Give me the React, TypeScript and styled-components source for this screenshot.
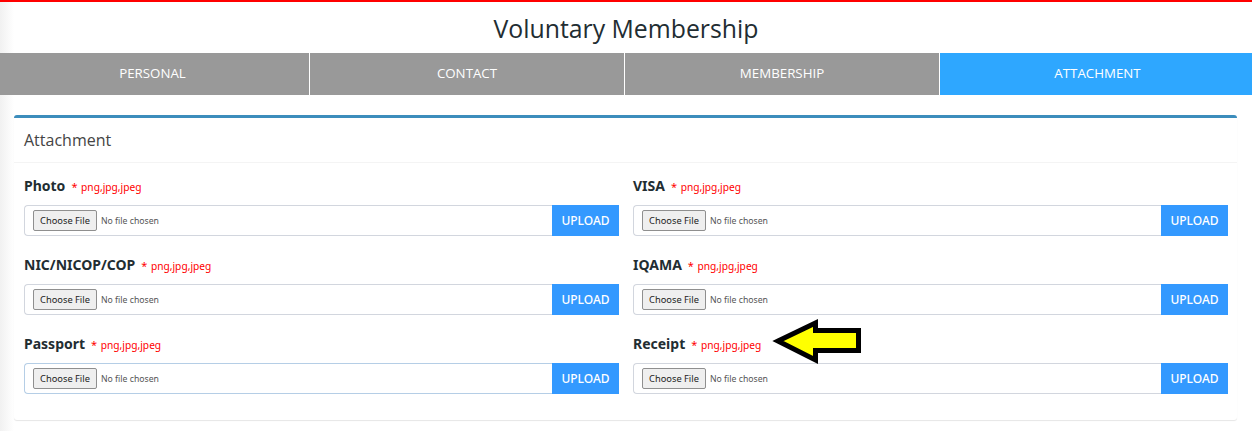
import React from "react";
import styled, { createGlobalStyle } from "styled-components";

const GlobalStyle = createGlobalStyle`
  html, body {
    margin: 0;
    padding: 0;
    background: #fff;
  }
  * {
    box-sizing: border-box;
  }
`;

const tabs = ["PERSONAL", "CONTACT", "MEMBERSHIP", "ATTACHMENT"];

const rows = [
  [{ label: "Photo" }, { label: "VISA" }],
  [{ label: "NIC/NICOP/COP" }, { label: "IQAMA" }],
  [{ label: "Passport", focused: true }, { label: "Receipt", arrow: true }],
];

type UploadProps = {
  label: string;
  focused?: boolean;
  arrow?: boolean;
};

function UploadField({ label, focused, arrow }: UploadProps) {
  return (
    <Field>
      <LabelRow>
        <Label>{label}</Label>
        <Hint>
          <Star>*</Star> png,jpg,jpeg
        </Hint>
        {arrow && <Arrow />}
      </LabelRow>
      <InputGroup>
        <FileBox $focused={focused}>
          <ChooseButton>Choose File</ChooseButton>
          <NoFile>No file chosen</NoFile>
        </FileBox>
        <UploadButton>UPLOAD</UploadButton>
      </InputGroup>
    </Field>
  );
}

function Arrow() {
  return (
    <ArrowSvg width="92" height="50" viewBox="0 0 92 50">
      <path
        d="M8 25 L45.5 7 L45.5 14.5 L88.5 14.5 L88.5 34.5 L45.5 34.5 L45.5 44 Z"
        fill="#ffff00"
        stroke="#000"
        strokeWidth="5"
        strokeLinejoin="miter"
      />
    </ArrowSvg>
  );
}

export default function App() {
  return (
    <Page>
      <GlobalStyle />
      <Title>Voluntary Membership</Title>
      <Tabs>
        {tabs.map((tab, i) => (
          <Tab key={tab} $active={i === 3} $first={i === 0}>
            {tab}
          </Tab>
        ))}
      </Tabs>
      <Content>
        <Panel>
          <PanelHeader>Attachment</PanelHeader>
          <PanelBody>
            {rows.flat().map(field => (
              <UploadField key={field.label} {...field} />
            ))}
          </PanelBody>
        </Panel>
      </Content>
    </Page>
  );
}

const Page = styled.div`
  width: 1252px;
  height: 431px;
  overflow: hidden;
  border-top: 2px solid #f00;
  background: linear-gradient(to right, #f1f1f1, #fff 14px);
  font-family: "Noto Sans", "Open Sans", sans-serif;
`;
const Title = styled.h1`
  margin: 0;
  height: 51px;
  padding-top: 8px;
  text-align: center;
  font-family: "Open Sans", "Noto Sans", sans-serif;
  font-size: 24.8px;
  line-height: 36px;
  font-weight: 400;
  color: #222d32;
`;
const Tabs = styled.div`
  display: grid;
  grid-template-columns: 309px 314px 314px 312px;
  column-gap: 1px;
  background: #fff;
`;
const Tab = styled.div<{ $active?: boolean; $first?: boolean }>`
  height: 42px;
  line-height: 41px;
  text-align: center;
  font-family: "Open Sans", "Noto Sans", sans-serif;
  font-size: 13.3px;
  color: #fff;
  background: ${props => (props.$active ? "#2ea7ff" : "#999999")};
  padding-right: ${props => (props.$first ? "4px" : "0")};
  padding-left: ${props => (props.$active ? "3px" : "0")};
`;
const Content = styled.div`
  padding: 20px 15px 0 14px;
`;
const Panel = styled.section`
  height: 305px;
  background: #fff;
  border-top: 3px solid #3c8dbc;
  border-radius: 3px;
  box-shadow: 0 1px 1px rgba(0, 0, 0, 0.1);
`;
const PanelHeader = styled.div`
  height: 45px;
  padding: 10px 10px 0;
  font-family: "Open Sans", "Noto Sans", sans-serif;
  font-size: 16px;
  line-height: 24px;
  color: #444;
  border-bottom: 1px solid #f4f4f4;
`;
const PanelBody = styled.div`
  display: grid;
  grid-template-columns: 595px 595px;
  column-gap: 14px;
  row-gap: 15px;
  padding: 13px 10px 0;
`;
const Field = styled.div`
  height: 64px;
`;
const LabelRow = styled.div`
  position: relative;
  display: flex;
  align-items: baseline;
  height: 29px;
  line-height: 20px;
  white-space: nowrap;
`;
const Label = styled.label`
  font-size: 14px;
  font-weight: 700;
  color: #222d32;
`;
const Hint = styled.span`
  margin-left: 6px;
  font-size: 10.2px;
  word-spacing: 1px;
  color: #f00;
`;
const Star = styled.span`
  font-size: 11px;
`;
const ArrowSvg = styled.svg`
  position: absolute;
  left: 137px;
  top: -18px;
`;
const InputGroup = styled.div`
  display: flex;
  height: 31px;
`;
const FileBox = styled.div<{ $focused?: boolean }>`
  flex: 1;
  display: flex;
  align-items: center;
  gap: 4px;
  padding-left: 8px;
  background: #fff;
  border: 1px solid ${props => (props.$focused ? "#b5cee6" : "#d2d6de")};
  border-right: 0;
  border-radius: 4px 0 0 4px;
`;
const ChooseButton = styled.div`
  width: 64px;
  height: 21px;
  line-height: 19px;
  text-align: center;
  font-size: 9.3px;
  color: #222;
  background: #efefef;
  border: 1px solid #8f8f8f;
  border-radius: 2px;
`;
const NoFile = styled.span`
  font-size: 8.7px;
  color: #555;
`;
const UploadButton = styled.div`
  width: 67px;
  line-height: 31px;
  text-align: center;
  font-size: 12px;
  font-weight: 500;
  color: #fff;
  background: #3399ff;
`;
